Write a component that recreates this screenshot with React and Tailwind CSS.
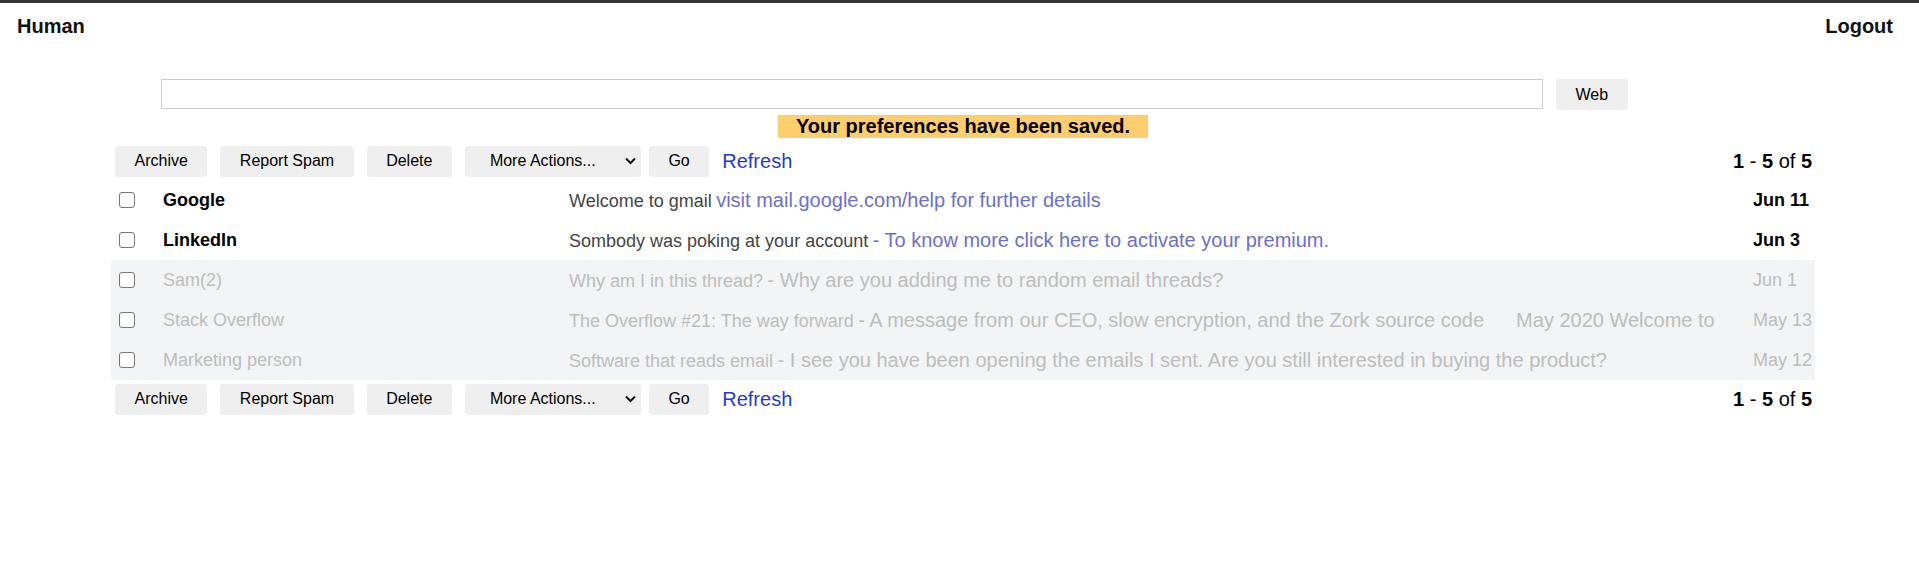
import React from 'react';

const emails = [
  { name: 'Google', subject: 'Welcome to gmail', snippet: 'visit mail.google.com/help for further details', date: 'Jun 11', unread: true },
  { name: 'LinkedIn', subject: 'Sombody was poking at your account', snippet: '- To know more click here to activate your premium.', date: 'Jun 3', unread: true },
  { name: 'Sam(2)', subject: 'Why am I in this thread?', snippet: '- Why are you adding me to random email threads?', date: 'Jun 1' },
  { name: 'Stack Overflow', subject: 'The Overflow #21: The way forward', snippet: '- A message from our CEO, slow encryption, and the Zork source code', extra: 'May 2020 Welcome to', date: 'May 13' },
  { name: 'Marketing person', subject: 'Software that reads email', snippet: '- I see you have been opening the emails I sent. Are you still interested in buying the product?', date: 'May 12' },
];

// plain grey buttons, like the browser default ones but flat
const Btn = ({ children, className = '' }) => (
  <button className={`h-[31px] px-[19.5px] bg-[#efefef] rounded-[3px] text-[16px] leading-[18px] text-black ${className}`}>
    {children}
  </button>
);

const Toolbar = () => (
  <div className="flex items-center justify-between h-[38px] pl-[4px] pr-[3px]">
    <div className="flex items-center">
      <Btn>Archive</Btn>
      <Btn className="ml-[13px]">Report Spam</Btn>
      <Btn className="ml-[13px]">Delete</Btn>
      <div className="ml-[13px] h-[31px] w-[176px] pl-[25px] pr-[5px] bg-[#efefef] rounded-[3px] flex items-center justify-between text-[16px] text-black">
        <span>More Actions...</span>
        <svg width="11" height="8" viewBox="0 0 11 8" fill="none">
          <path d="M1 1.5 L5.5 6 L10 1.5" stroke="#111" strokeWidth="2" />
        </svg>
      </div>
      <Btn className="ml-[8px]">Go</Btn>
      <a href="#" className="ml-[13px] text-[20px] leading-[22px] text-[#1f3bd6]">Refresh</a>
    </div>
    <div className="text-[20px] leading-[22px] text-black">
      <b>1</b> - <b>5</b> of <b>5</b>
    </div>
  </div>
);

const EmailRow = ({ email }) => {
  const read = !email.unread;
  return (
    <div className={`flex items-center h-[40px] pl-[8px] ${read ? 'bg-[#f3f4f6]' : ''}`}>
      <input type="checkbox" className="appearance-none w-[16px] h-[16px] border border-[#767676] rounded-[3px] bg-white shrink-0" />
      <div className={`ml-[28px] w-[406px] shrink-0 text-[18px] ${read ? 'text-[#bdbdbd]' : 'font-bold text-black'}`}>
        {email.name}
      </div>
      <div className="flex-1 min-w-0 whitespace-nowrap overflow-hidden">
        <span className={`text-[18px] ${read ? 'text-[#bdbdbd]' : 'text-[#444]'}`}>{email.subject}</span>{' '}
        <span className={`text-[20px] ${read ? 'text-[#bdbdbd]' : 'text-[#6b6fcf]'}`}>{email.snippet}</span>
        {email.extra && <span className="ml-[32px] text-[20px] text-[#bdbdbd]">{email.extra}</span>}
      </div>
      <div className={`w-[62px] shrink-0 text-[18px] ${read ? 'text-[#bdbdbd]' : 'font-bold text-black'}`}>
        {email.date}
      </div>
    </div>
  );
};

export default function App() {
  return (
    <div className="min-h-screen bg-white border-t-[3px] border-[#353535] font-['Liberation_Sans',Arial,sans-serif]">
      {/* header */}
      <div className="flex justify-between pt-[12px] pl-[17px] pr-[26px] text-[20px] leading-[23px] font-bold text-[#111]">
        <span>Human</span>
        <span>Logout</span>
      </div>

      {/* search */}
      <div className="flex items-start mt-[41px] ml-[161px]">
        <input type="text" className="w-[1382px] h-[30px] border border-[#cccccc] outline-none" />
        <Btn className="ml-[13px]">Web</Btn>
      </div>

      {/* notice */}
      <div className="flex justify-center mt-[5px] pl-[7px]">
        <div className="bg-[#fecd6e] px-[18px] h-[23px] text-[20px] leading-[23px] font-bold text-black">
          Your preferences have been saved.
        </div>
      </div>

      {/* mail list */}
      <div className="mt-[4px] ml-[111px] w-[1704px]">
        <Toolbar />
        <div>
          {emails.map((email) => (
            <EmailRow key={email.name} email={email} />
          ))}
        </div>
        <Toolbar />
      </div>
    </div>
  );
}
